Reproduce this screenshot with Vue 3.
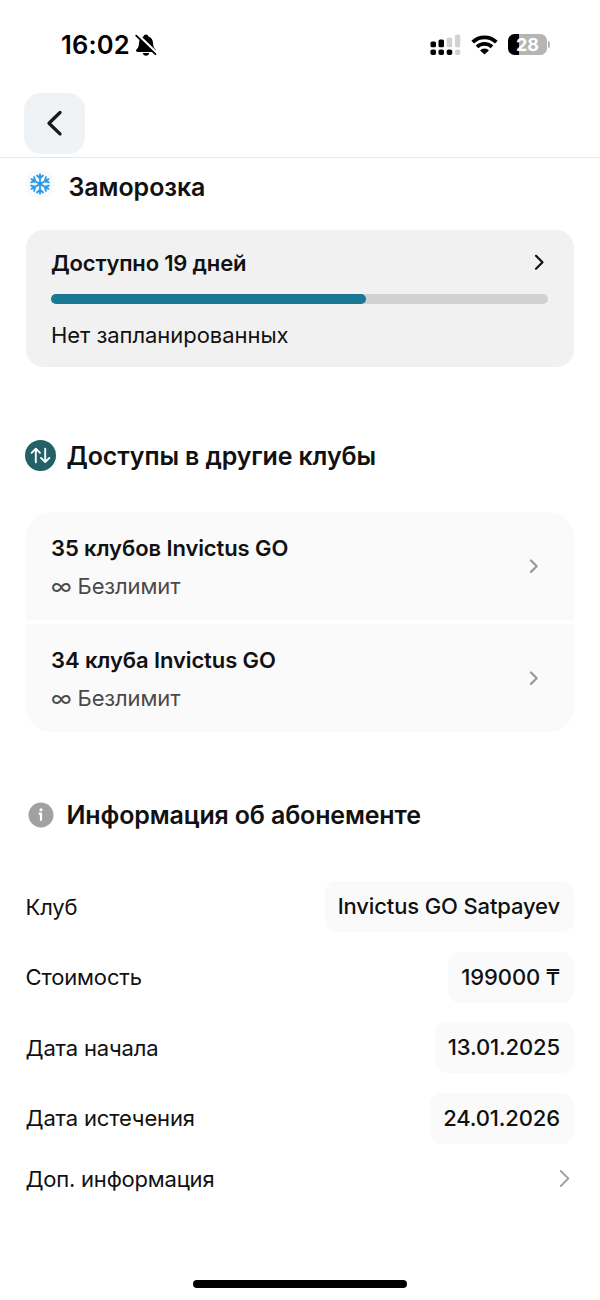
<script setup>
const clubs = [
  { title: '35 клубов Invictus GO', access: '∞ Безлимит' },
  { title: '34 клуба Invictus GO', access: '∞ Безлимит' },
]
const details = [
  { label: 'Клуб', value: 'Invictus GO Satpayev' },
  { label: 'Стоимость', value: '199000 ₸' },
  { label: 'Дата начала', value: '13.01.2025' },
  { label: 'Дата истечения', value: '24.01.2026' },
]
const progress = 63.4
</script>

<template>
  <main class="screen">
    <div class="status">
      <span class="time">16:02</span>
      <svg class="bell" width="24" height="24" viewBox="0 0 24 24">
        <path d="M12 1.500c-1.400 0-2.200.8-2.400 1.900C6.300 4.400 5.100 7 5 10c-.1 3.500-.8 4.700-2.400 6.300-1 1-.6 2.600.8 2.600h17.200c1.400 0 1.800-1.600.8-2.600-1.600-1.600-2.300-2.800-2.400-6.300-.1-3-1.300-5.600-4.600-6.600-.2-1.100-1-1.900-2.400-1.900z" fill="#000" />
        <path d="M8.800 20h6.400c-.3 1.700-1.500 2.700-3.200 2.700S9.100 21.700 8.800 20z" fill="#000" />
        <path d="M3.500 1.500 23.500 20.700" stroke="#fff" stroke-width="2.600" />
        <path d="M2.200 2.700 21.400 21.200" stroke="#000" stroke-width="1.800" stroke-linecap="round" />
      </svg>
      <span class="spacer"></span>
      <svg class="signal" width="32" height="22" viewBox="0 0 32 22">
        <g fill="#000">
          <rect x="0.500" y="7.500" width="5.500" height="5.800" rx="1.600" />
          <rect x="8.500" y="5.500" width="5.500" height="7.800" rx="1.600" />
          <rect x="0.500" y="15.500" width="5.500" height="5.500" rx="1.800" />
          <rect x="8.500" y="15.500" width="5.500" height="5.500" rx="1.800" />
          <rect x="16.700" y="15.500" width="5.500" height="5.500" rx="1.800" />
        </g>
        <g fill="#d2d2d2">
          <rect x="16.700" y="3.500" width="5.500" height="9.800" rx="1.600" />
          <rect x="25" y="0.500" width="5.300" height="12.800" rx="1.600" />
          <rect x="25" y="15.500" width="5.300" height="5.500" rx="1.800" />
        </g>
      </svg>
      <svg class="wifi" width="27" height="20" viewBox="0 0 27 20">
        <g fill="none" stroke="#000" stroke-width="3.800">
          <path d="M1.700 7.100a17 17 0 0 1 23.600 0" />
          <path d="M6 11.900a10.800 10.800 0 0 1 15 0" />
        </g>
        <path d="M13.500 19.500 9.100 15.400a6 6 0 0 1 8.800 0z" fill="#000" />
      </svg>
      <div class="battery"><span>28</span></div>
      <i class="nub"></i>
    </div>

    <header class="bar">
      <button class="back" aria-label="Назад">
        <svg width="61" height="61" viewBox="0 0 61 61"><path d="M36 19.500 25 30.200l11 10.700" fill="none" stroke="#171a1c" stroke-width="3.300" stroke-linecap="round" stroke-linejoin="round" /></svg>
      </button>
    </header>

    <section class="freeze">
      <h2>
        <svg class="snow" width="30" height="30" viewBox="-15 -15 30 30">
          <circle r="14" fill="#f7f9fb" />
          <g fill="none" stroke="#2498e5" stroke-width="1.800" stroke-linecap="round">
            <path v-for="n in 6" :key="n" :transform="`rotate(${n * 60})`" d="M0 0V-9.800M-3-8.500 0-5.700l3-2.800" />
          </g>
        </svg>
        <span>Заморозка</span>
      </h2>
      <div class="freeze-card">
        <div class="line">
          <strong>Доступно 19 дней</strong>
          <svg width="20" height="20" viewBox="0 0 20 20"><path d="M8 2.800 14.500 9.300l-6.500 6.500" fill="none" stroke="#111" stroke-width="2.200" stroke-linecap="round" stroke-linejoin="round" /></svg>
        </div>
        <div class="track"><div class="fill" :style="{ width: progress + '%' }"></div></div>
        <p>Нет запланированных</p>
      </div>
    </section>

    <section class="access">
      <h2>
        <svg class="swap" width="31" height="31" viewBox="0 0 31 31">
          <circle cx="15.500" cy="15.500" r="15.500" fill="#236068" />
          <path d="M10.800 22.300V9M6.600 12.900 10.800 8.700l4.200 4.200M20.200 8.700V22M16 17.900l4.200 4.200 4.200-4.200" fill="none" stroke="#fff" stroke-width="1.900" stroke-linecap="round" stroke-linejoin="round" />
        </svg>
        <span>Доступы в другие клубы</span>
      </h2>
      <div class="clubs">
        <div v-for="club in clubs" :key="club.title" class="club">
          <div>
            <strong>{{ club.title }}</strong>
            <p>{{ club.access }}</p>
          </div>
          <svg width="20" height="20" viewBox="0 0 20 20"><path d="M8 4.500 13.700 10.200 8 15.900" fill="none" stroke="#9b9b9b" stroke-width="2.300" stroke-linecap="round" stroke-linejoin="round" /></svg>
        </div>
      </div>
    </section>

    <section class="info">
      <h2>
        <svg class="info-icon" width="31" height="26" viewBox="0 0 31 26">
          <circle cx="16" cy="13" r="12.500" fill="#a0a2a1" />
          <circle cx="16" cy="7.800" r="1.600" fill="#fff" />
          <path d="M14.600 11.700H16V18" fill="none" stroke="#fff" stroke-width="2.200" stroke-linecap="round" stroke-linejoin="round" />
        </svg>
        <span>Информация об абонементе</span>
      </h2>
      <dl>
        <div v-for="item in details" :key="item.label" class="row">
          <dt>{{ item.label }}</dt>
          <dd>{{ item.value }}</dd>
        </div>
      </dl>
      <div class="more">
        <span>Доп. информация</span>
        <svg width="20" height="20" viewBox="0 0 20 20"><path d="M6.800 2 14.300 9.500 6.800 17" fill="none" stroke="#a0a0a0" stroke-width="1.800" stroke-linecap="round" stroke-linejoin="round" /></svg>
      </div>
    </section>
    <div class="home"></div>
  </main>
</template>

<style>
body {
  background: #fff;
}
</style>

<style scoped>
* {
  box-sizing: border-box;
}
.screen {
  display: flex;
  flex-direction: column;
  width: 600px;
  height: 1300px;
  overflow: hidden;
  background: #fff;
  color: #111;
  font-family: Inter, "Noto Sans", sans-serif;
  font-size: 22px;
  line-height: 28px;
}
svg {
  display: block;
  flex: none;
}
h2, p, dl, dd {
  margin: 0;
}
.status {
  display: flex;
  align-items: center;
  height: 89px;
  padding: 0 50px 0 61px;
}
.time {
  width: 73px;
  color: #000;
  font-size: 25.500px;
  font-weight: 600;
  letter-spacing: 0.200px;
  white-space: nowrap;
}
.spacer {
  flex: 1;
}
.signal {
  margin-right: 9px;
}
.wifi {
  margin-right: 10px;
}
.battery {
  display: flex;
  align-items: center;
  justify-content: center;
  width: 39px;
  height: 21px;
  border-radius: 6.500px;
  background: linear-gradient(90deg, #000 11px, #b5b5b5 11px);
  color: #fff;
  font-size: 18px;
  font-weight: 700;
  line-height: 21px;
}
.nub {
  width: 2px;
  height: 7px;
  margin-left: 1px;
  border-radius: 0 2px 2px 0;
  background: #b5b5b5;
}
.bar {
  height: 69px;
  padding: 4px 24px 0;
  border-bottom: 1px solid #e7e8e9;
}
.back {
  display: block;
  width: 61px;
  height: 61px;
  padding: 0;
  border: 0;
  border-radius: 17px;
  background: #eff3f6;
}
h2 {
  display: flex;
  align-items: center;
  height: 32px;
  font-size: 25px;
  font-weight: 600;
  letter-spacing: -0.130px;
  line-height: 32px;
  white-space: nowrap;
}
strong {
  display: block;
  font-size: 22px;
  font-weight: 600;
  letter-spacing: -0.100px;
}
section {
  padding: 0 26px;
}
.freeze {
  padding-top: 13px;
}
.freeze h2 {
  letter-spacing: -0.080px;
}
.snow {
  margin: -6px 13.500px 0 -1px;
}
.freeze-card {
  height: 137.500px;
  margin-top: 26.500px;
  padding: 19.500px 26px 0 25px;
  border-radius: 18px;
  background: #f1f1f1;
}
.line {
  display: flex;
  align-items: center;
  justify-content: space-between;
}
.line strong {
  letter-spacing: -0.180px;
}
.track {
  height: 10px;
  margin: 17px 0;
  border-radius: 5px;
  background: #d1d1d1;
}
.fill {
  height: 100%;
  border-radius: 5px;
  background: #197894;
}
.freeze-card p {
  letter-spacing: -0.050px;
}
.access {
  padding-top: 73px;
}
.swap {
  margin: -1px 10.500px 0 -1px;
}
.clubs {
  display: flex;
  flex-direction: column;
  gap: 4px;
  margin-top: 40px;
  border-radius: 25px;
  overflow: hidden;
}
.club {
  display: flex;
  justify-content: space-between;
  align-items: flex-start;
  height: 108px;
  padding: 22px 31px 0 25px;
  background: #fafafa;
}
.club svg {
  margin-top: 22px;
}
.club p {
  margin-top: 10px;
  color: #4a4a4a;
  letter-spacing: -0.120px;
}
.info {
  padding-top: 67px;
}
.info-icon {
  margin: 0 10.500px 0 -1px;
}
.info h2 {
  letter-spacing: -0.160px;
}
dl {
  display: flex;
  flex-direction: column;
  gap: 19.500px;
  margin-top: 50px;
}
.row {
  display: flex;
  align-items: center;
  justify-content: space-between;
  height: 51px;
}
dt, .more span {
  margin-left: -0.500px;
  letter-spacing: -0.150px;
}
dd {
  height: 51px;
  padding: 0 14px 0 13px;
  border-radius: 12px;
  background: #fafafa;
  font-weight: 500;
  letter-spacing: -0.130px;
  line-height: 51px;
}
.more {
  display: flex;
  align-items: center;
  justify-content: space-between;
  margin-top: 21px;
}
.more span {
  letter-spacing: -0.220px;
}
.home {
  width: 214px;
  height: 8px;
  margin: auto auto 12px;
  border-radius: 4px;
  background: #000;
}
</style>
